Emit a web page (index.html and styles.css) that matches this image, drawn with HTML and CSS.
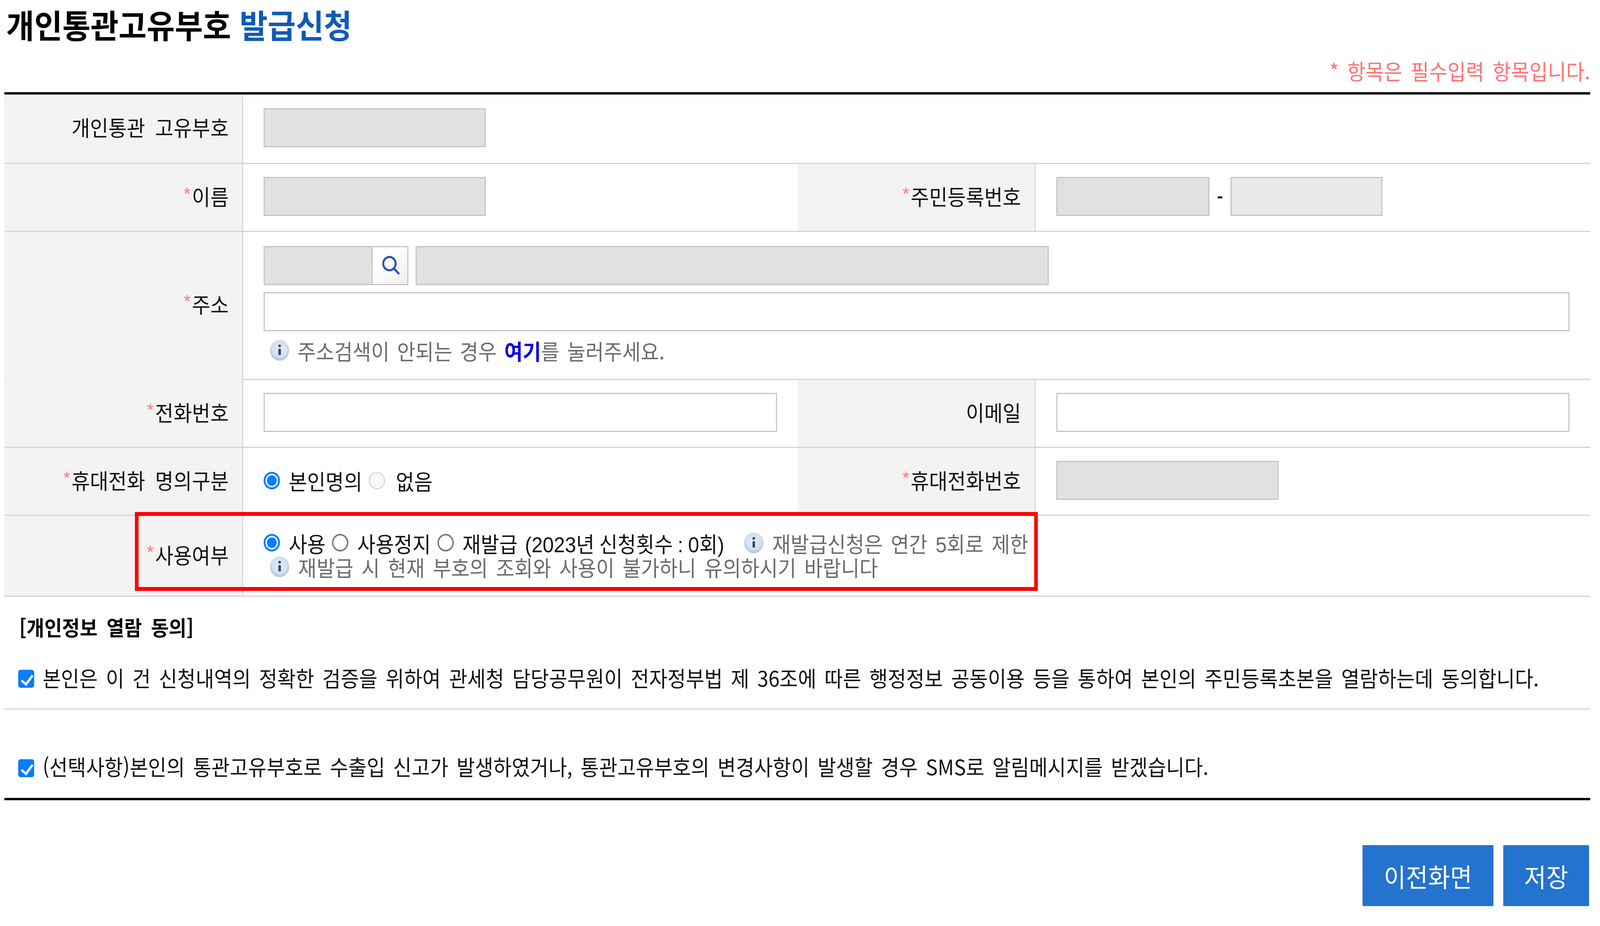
FILE: index.html
```html
<!DOCTYPE html>
<html lang="ko">
<head>
<meta charset="utf-8">
<title>개인통관고유부호 발급신청</title>
<link rel="stylesheet" href="styles.css">
</head>
<body>
<svg class="defs" width="0" height="0" aria-hidden="true">
  <defs>
    <radialGradient id="infoFill" cx="50%" cy="42%" r="58%">
      <stop offset="0%" stop-color="#e6ecf6"/>
      <stop offset="70%" stop-color="#d2deef"/>
      <stop offset="100%" stop-color="#a9bfe0"/>
    </radialGradient>
    <symbol id="info" viewBox="0 0 54 54">
      <circle cx="27" cy="27" r="26.5" fill="url(#infoFill)"/>
      <circle cx="27" cy="15.5" r="3.6" fill="#3b4a60"/>
      <rect x="23.5" y="23" width="7" height="16" rx="1" fill="#3b4a60"/>
    </symbol>
  </defs>
</svg>
<div class="frame">
<main class="page">
  <h1 class="title">개인통관고유부호 <span class="title-accent">발급신청</span></h1>
  <p class="required-note">* 항목은 필수입력 항목입니다.</p>
  <form class="form">
    <div class="row row-1">
      <div class="label label-first">개인통관 고유부호</div>
      <div class="value span-3"><input class="field field-ro w-611" disabled></div>
    </div>
    <div class="row row-2">
      <div class="label"><span class="req">*</span>이름</div>
      <div class="value"><input class="field field-ro w-611" disabled></div>
      <div class="label"><span class="req">*</span>주민등록번호</div>
      <div class="value value-r">
        <input class="field field-ro w-421" disabled>
        <span class="dash">-</span>
        <input class="field field-ro2 w-418" disabled>
      </div>
    </div>
    <div class="row row-3">
      <div class="label label-merged"><span class="req">*</span>주소</div>
      <div class="value span-3 address">
        <div class="address-top">
          <div class="zip">
            <input class="field field-ro zip-input" disabled>
            <button type="button" class="zip-btn" aria-label="검색">
              <svg viewBox="0 0 48 48" width="48" height="48"><circle cx="20" cy="20" r="17" fill="none" stroke="#2a53ae" stroke-width="5.5"/><path d="M32 32 L45 45" stroke="#2a53ae" stroke-width="5.5" stroke-linecap="round"/></svg>
            </button>
          </div>
          <input class="field field-ro w-1741" disabled>
        </div>
        <input class="field w-3591">
        <p class="hint hint-address"><svg class="info"><use href="#info"/></svg><span>주소검색이 안되는 경우 <a class="link" href="#">여기</a>를 눌러주세요.</span></p>
      </div>
    </div>
    <div class="row row-4">
      <div class="label"><span class="req">*</span>전화번호</div>
      <div class="value"><input class="field w-1412"></div>
      <div class="label">이메일</div>
      <div class="value value-r"><input class="field w-1411"></div>
    </div>
    <div class="row row-5">
      <div class="label"><span class="req">*</span>휴대전화 명의구분</div>
      <div class="value">
        <label class="opt"><input type="radio" name="owner" checked>본인명의</label>
        <label class="opt opt-none"><input type="radio" name="owner" disabled>없음</label>
      </div>
      <div class="label"><span class="req">*</span>휴대전화번호</div>
      <div class="value value-r"><input class="field field-ro w-611" disabled></div>
    </div>
    <div class="row row-6">
      <div class="label"><span class="req">*</span>사용여부</div>
      <div class="value span-3 use">
        <div class="use-line">
          <label class="opt"><input type="radio" name="use" checked>사용</label>
          <label class="opt"><input type="radio" name="use">사용정지</label>
          <label class="opt"><input type="radio" name="use">재발급</label>
          <span class="count">(2023년 신청횟수 : 0회)</span>
          <span class="hint hint-inline"><svg class="info"><use href="#info"/></svg><span>재발급신청은 연간 5회로 제한</span></span>
        </div>
        <p class="hint hint-second"><svg class="info"><use href="#info"/></svg><span>재발급 시 현재 부호의 조회와 사용이 불가하니 유의하시기 바랍니다</span></p>
      </div>
    </div>
    <div class="highlight"></div>
    <h2 class="consent-title">[개인정보 열람 동의]</h2>
    <label class="consent consent-1"><input type="checkbox" checked><span>본인은 이 건 신청내역의 정확한 검증을 위하여 관세청 담당공무원이 전자정부법 제 36조에 따른 행정정보 공동이용 등을 통하여 본인의 주민등록초본을 열람하는데 동의합니다.</span></label>
    <label class="consent consent-2"><input type="checkbox" checked><span>(선택사항)본인의 통관고유부호로 수출입 신고가 발생하였거나, 통관고유부호의 변경사항이 발생할 경우 SMS로 알림메시지를 받겠습니다.</span></label>
    <div class="actions">
      <button type="button" class="btn btn-prev">이전화면</button>
      <button type="button" class="btn btn-save">저장</button>
    </div>
  </form>
</main>
</div>
</body>
</html>
```
FILE: styles.css
```css
* { box-sizing: border-box; }
html, body { margin: 0; padding: 0; background: #fff; }
body {
  font-family: "Noto Sans CJK KR", "Noto Sans", sans-serif;
  font-size: 55px;
  color: #111;
  word-spacing: 7.5px;
}
.defs { position: absolute; }
/* The browser clamps the window to 4096px wide: the 4400px design is fitted horizontally. */
.frame { width: 100%; overflow: hidden; }
.page {
  width: 4400px;
  padding: 0 27px 0 12px;
  transform: scaleX(0.9309);
  transform-origin: left top;
}
.title {
  margin: 0;
  height: 130px;
  padding-left: 5px;
  font-size: 84px;
  line-height: 124px;
  font-weight: 700;
  color: #000;
  word-spacing: 0;
}
.title-accent { color: #0f5bb5; }
.required-note {
  margin: 0;
  height: 106px;
  line-height: 100px;
  text-align: right;
  color: #ff7272;
}
.form { position: relative; border-top: 6px solid #000; }
.row {
  display: grid;
  grid-template-columns: 657px 1525px 654px 1fr;
  border-bottom: 3px solid #d4d4d4;
}
.row-1 { height: 178px; }
.row-2 { height: 174px; }
.row-3 { height: 379px; }
.row-4 { height: 174px; }
.row-5 { height: 174px; }
.row-6 { height: 207px; }
.label {
  display: flex;
  align-items: center;
  justify-content: flex-end;
  padding: 0 37px 9px 0;
  background: #f3f3f3;
  border-right: 3px solid #d6d6d6;
  white-space: pre;
  word-spacing: 12px;
}
.label-first { padding-bottom: 12px; }
.label-merged { margin-bottom: -3px; padding-bottom: 14px; }
.req { color: #ff8a8a; font-size: 52px; margin-right: 1px; position: relative; top: -3px; }
.value {
  display: flex;
  align-items: center;
  padding: 0 0 5px 56px;
  min-width: 0;
}
.value-r { padding-left: 57px; }
.span-3 { grid-column: 2 / 5; }
.field {
  display: block;
  flex: none;
  height: 100px;
  border: 3px solid #c4c4c4;
  background: #fff;
  border-radius: 0;
  padding: 0;
  margin: 0;
  outline: none;
}
.field-ro { background: #e1e1e1; }
.field-ro2 { background: #e9e9e9; }
.w-611 { width: 611px; }
.w-421 { width: 421px; }
.w-418 { width: 418px; }
.w-1741 { width: 1741px; }
.w-3591 { width: 3591px; }
.w-1412 { width: 1412px; }
.w-1411 { width: 1411px; }
.dash { width: 58px; text-align: center; font-size: 46px; font-weight: 700; line-height: 1; color: #000; }
.address {
  display: flex;
  flex-direction: column;
  align-items: flex-start;
  padding: 36px 0 0 56px;
}
.address-top { display: flex; gap: 20px; margin-bottom: 18px; }
.zip { display: flex; }
.zip-input { width: 297px; border-right: 0; }
.zip-btn {
  width: 101px;
  height: 100px;
  padding: 0 0 2px 4px;
  display: flex;
  align-items: center;
  justify-content: center;
  border: 3px solid #c4c4c4;
  background: linear-gradient(135deg, #fff 30%, #eeeeee);
}
.hint {
  display: flex;
  align-items: center;
  margin: 0;
  color: #6c6c6c;
  white-space: nowrap;
  line-height: 56px;
}
.info { width: 54px; height: 54px; flex: none; }
.hint-address { margin: 21px 0 0 17px; gap: 22px; word-spacing: 5.5px; }
.link { color: #0000e0; font-weight: 700; text-decoration: none; }
.opt {
  display: inline-flex;
  align-items: center;
  gap: 24px;
  margin-right: 18px;
  white-space: nowrap;
  line-height: 56px;
}
.opt-none { gap: 29px; }
input[type="radio"] {
  appearance: none;
  flex: none;
  width: 45px;
  height: 45px;
  margin: 0;
  border: 4px solid #767676;
  border-radius: 50%;
  background: #fff;
}
input[type="radio"]:checked {
  border: 5px solid #0a7cff;
  background: radial-gradient(circle, #0a7cff 0 13px, #fff 14px);
}
input[type="radio"]:disabled {
  border: 3px solid #d8d8d8;
  background: #f8f8f8;
}
.use {
  display: block;
  padding: 42px 0 0 56px;
  font-family: "Liberation Sans", "Noto Sans CJK KR", sans-serif;
  word-spacing: 6.9px;
}
.use input[type="radio"], .use .info { margin-top: -10px; }
.use-line { display: flex; align-items: center; height: 63px; line-height: 56px; }
.count { margin-left: 2px; white-space: nowrap; word-spacing: -2px; }
.hint-inline { margin-left: 54px; gap: 24px; }
.hint-second { margin: 0 0 0 17px; height: 60px; gap: 24px; }
.highlight {
  position: absolute;
  left: 359px;
  top: 1069px;
  width: 2483px;
  height: 202px;
  border: 10px solid #f00;
  pointer-events: none;
}
.consent-title {
  margin: 0;
  height: 154px;
  padding-left: 41px;
  font-size: 53px;
  line-height: 154px;
  font-weight: 700;
  color: #000;
  word-spacing: 10px;
}
.consent {
  display: flex;
  align-items: center;
  gap: 23px;
  padding-left: 38px;
  color: #111;
  word-spacing: 6.9px;
}
input[type="checkbox"] {
  appearance: none;
  position: relative;
  flex: none;
  width: 44px;
  height: 46px;
  margin: 0;
  border-radius: 7px;
  background: #0a7cff;
}
input[type="checkbox"]:checked::after {
  content: "";
  position: absolute;
  left: 15px;
  top: 7px;
  width: 13px;
  height: 26px;
  border: solid #fff;
  border-width: 0 6px 6px 0;
  transform: rotate(38deg);
}
.consent span { white-space: nowrap; position: relative; top: -4px; }
.consent-2 span { top: -6px; }
.consent-1 { height: 135px; padding-top: 33px; padding-bottom: 53px; border-bottom: 3px solid #d4d4d4; }
.consent-2 { height: 232px; padding-top: 127px; padding-bottom: 53px; border-bottom: 6px solid #000; }
.actions {
  display: flex;
  justify-content: flex-end;
  gap: 27px;
  margin-top: 115px;
  padding-right: 3px;
}
.btn {
  height: 156px;
  border: 0;
  padding: 0;
  background: #2373cf;
  color: #fff;
  font: inherit;
  font-size: 66px;
}
.btn-prev { width: 360px; }
.btn-save { width: 236px; }
```
